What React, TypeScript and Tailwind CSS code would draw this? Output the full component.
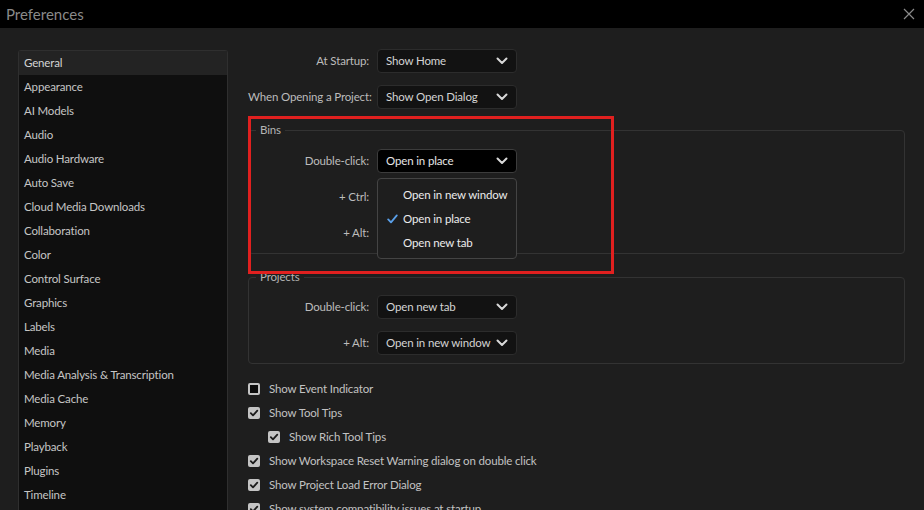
import React from "react";

const categories = [
  "General",
  "Appearance",
  "AI Models",
  "Audio",
  "Audio Hardware",
  "Auto Save",
  "Cloud Media Downloads",
  "Collaboration",
  "Color",
  "Control Surface",
  "Graphics",
  "Labels",
  "Media",
  "Media Analysis & Transcription",
  "Media Cache",
  "Memory",
  "Playback",
  "Plugins",
  "Timeline",
];

function Chevron() {
  return (
    <svg width="12" height="8" viewBox="0 0 12 8" className="shrink-0">
      <path d="M1.5 1.5 L6 6 L10.5 1.5" fill="none" stroke="#d8d8d8" strokeWidth="2" strokeLinecap="round" strokeLinejoin="round" />
    </svg>
  );
}

function Select({ value, focused }: { value: string; focused?: boolean }) {
  return (
    <div
      className={`flex h-[24px] w-[140px] items-center justify-between rounded-[4px] border pl-[8px] pr-[8px] ${
        focused ? "border-[#3c3c3c] bg-black text-[#e6e6e6]" : "border-[#2c2c2c] bg-[#121212] text-[#d4d4d4]"
      }`}
    >
      <span className="whitespace-nowrap">{value}</span>
      <Chevron />
    </div>
  );
}

function Row({ label, children }: { label: string; children?: React.ReactNode }) {
  return (
    <div className="flex h-[24px] items-center">
      <div className="w-[121px] shrink-0 whitespace-nowrap text-right text-[#bcbcbc]">{label}</div>
      <div className="ml-[8px]">{children}</div>
    </div>
  );
}

function Check({ checked, label, indent }: { checked: boolean; label: string; indent?: boolean }) {
  return (
    <div className={`flex h-[24px] items-center ${indent ? "pl-[20px]" : ""}`}>
      {checked ? (
        <span className="flex h-[12px] w-[12px] items-center justify-center rounded-[2px] bg-[#c4c4c4]">
          <svg width="10" height="10" viewBox="0 0 10 10">
            <path d="M1.8 5.2 L4 7.4 L8.3 2.6" fill="none" stroke="#1a1a1a" strokeWidth="1.8" strokeLinecap="round" strokeLinejoin="round" />
          </svg>
        </span>
      ) : (
        <span className="h-[12px] w-[12px] rounded-[2px] border-2 border-[#c4c4c4] bg-[#0c0c0c]" />
      )}
      <span className="ml-[9px] whitespace-nowrap text-[#c2c2c2]">{label}</span>
    </div>
  );
}

export default function App() {
  return (
    <div
      className="flex h-[510px] w-[924px] flex-col overflow-hidden bg-[#1e1e1e] text-[11.5px] tracking-[-0.15px]"
      style={{ fontFamily: "Lato, 'Open Sans', sans-serif" }}
    >
      <div className="flex h-[28px] shrink-0 items-center justify-between bg-black pl-[6px] pr-[9px]">
        <span className="text-[15px] tracking-normal text-[#8a8a8a]">Preferences</span>
        <svg width="12" height="12" viewBox="0 0 12 12">
          <path d="M1 1 L11 11 M11 1 L1 11" stroke="#8a8a8a" strokeWidth="1.2" />
        </svg>
      </div>

      <div className="flex flex-1">
        <div className="ml-[18px] mt-[22px] w-[210px] shrink-0 rounded-t-[3px] border border-b-0 border-[#2f2f2f] bg-[#0f0f0f]">
          {categories.map((c, i) => (
            <div
              key={c}
              className={`flex h-[24px] items-center pl-[5px] ${i === 0 ? "bg-[#232323] text-[#d4d4d4]" : "text-[#c6c6c6]"}`}
            >
              {c}
            </div>
          ))}
        </div>

        <div className="relative ml-[20px] mt-[21px] w-[657px]">
          <div className="flex flex-col gap-[12px]">
            <Row label="At Startup:">
              <Select value="Show Home" />
            </Row>
            <Row label="When Opening a Project:">
              <Select value="Show Open Dialog" />
            </Row>
          </div>

          <fieldset className="mt-[13px] rounded-[4px] border border-[#333333] pb-[8px] pl-[7px]">
            <legend className="px-[4px] leading-[16px] text-[#b4b4b4]">Bins</legend>
            <div className="-ml-[8px] flex flex-col gap-[12px] pt-[11px]">
              <Row label="Double-click:">
                <div className="relative">
                  <Select value="Open in place" focused />
                  <div className="absolute left-0 top-[29px] z-10 w-[140px] rounded-[4px] border border-[#444444] bg-[#1e1e1e] pb-[3px] pt-[4px]">
                    {[
                      ["Open in new window", false],
                      ["Open in place", true],
                      ["Open new tab", false],
                    ].map(([t, on]) => (
                      <div key={t as string} className="flex h-[24px] items-center whitespace-nowrap text-[#ececec]">
                        <span className="flex w-[25px] justify-end pr-[5px]">
                          {on ? (
                            <svg width="11" height="10" viewBox="0 0 11 10">
                              <path d="M1.2 5.4 L4 8.3 L9.8 1.4" fill="none" stroke="#5aa0ea" strokeWidth="1.8" strokeLinecap="round" strokeLinejoin="round" />
                            </svg>
                          ) : null}
                        </span>
                        <span>{t as string}</span>
                      </div>
                    ))}
                  </div>
                </div>
              </Row>
              <Row label="+ Ctrl:" />
              <Row label="+ Alt:" />
            </div>
          </fieldset>

          <fieldset className="mt-[15px] rounded-[4px] border border-[#333333] pb-[8px] pl-[7px]">
            <legend className="px-[4px] leading-[16px] text-[#b4b4b4]">Projects</legend>
            <div className="-ml-[8px] flex flex-col gap-[12px] pt-[10px]">
              <Row label="Double-click:">
                <Select value="Open new tab" />
              </Row>
              <Row label="+ Alt:">
                <Select value="Open in new window" />
              </Row>
            </div>
          </fieldset>

          <div className="mt-[13px] flex flex-col">
            <Check checked={false} label="Show Event Indicator" />
            <Check checked label="Show Tool Tips" />
            <Check checked indent label="Show Rich Tool Tips" />
            <Check checked label="Show Workspace Reset Warning dialog on double click" />
            <Check checked label="Show Project Load Error Dialog" />
            <Check checked label="Show system compatibility issues at startup" />
          </div>

          <div className="pointer-events-none absolute left-0 top-[67px] h-[158px] w-[366px] border-[3px] border-[#e0201f]" />
        </div>
      </div>
    </div>
  );
}
